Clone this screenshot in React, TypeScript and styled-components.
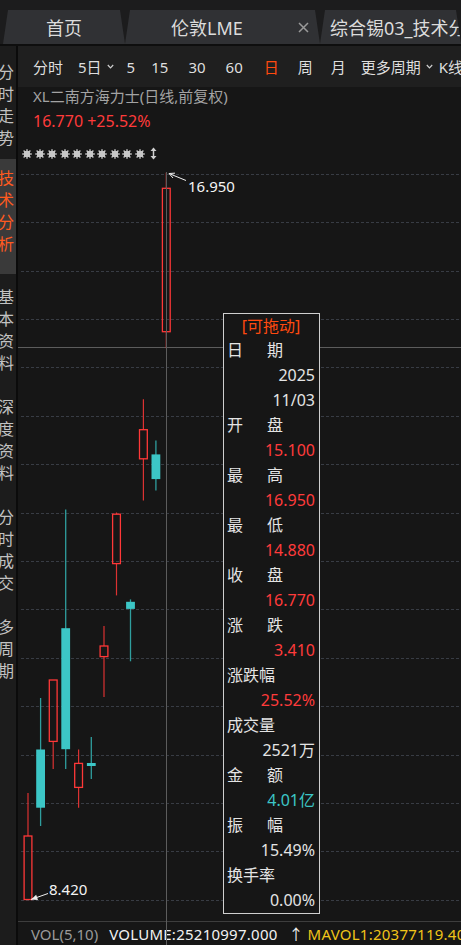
import styled, { createGlobalStyle } from "styled-components";

const RED = "#ff3b3b";
const CYAN = "#3cc6c6";
const TEXT = "#e4e4e4";

const GlobalStyle = createGlobalStyle`
  html, body {
    margin: 0;
    padding: 0;
    background: #161616;
  }
  body {
    font-family: "Noto Sans", "Noto Sans CJK SC", sans-serif;
  }
  * {
    box-sizing: border-box;
  }
`;

const Page = styled.div`
  width: 461px;
  height: 945px;
  overflow: hidden;
  display: flex;
  flex-direction: column;
  background: #161616;
`;

const TabBar = styled.div`
  height: 46px;
  padding: 10px 0 0 3px;
  display: flex;
  background: #1c1c1d;
  border-bottom: 2px solid #0e0e0e;
`;

const Tab = styled.div<{ $w?: number; $pl: number }>`
  flex: ${(p) => (p.$w ? `0 0 ${p.$w}px` : "1 1 0")};
  min-width: 0;
  display: flex;
  align-items: center;
  padding-left: ${(p) => p.$pl}px;
  padding-right: 11px;
  background: #303134;
  clip-path: polygon(5px 0, calc(100% - 5px) 0, 100% 100%, 0 100%);
  color: #dcdcdc;
  font-size: 18px;
  white-space: nowrap;
  overflow: hidden;
`;

const Close = styled.svg`
  margin-left: auto;
  flex-shrink: 0;
`;

const Body = styled.div`
  flex: 1;
  display: flex;
  min-height: 0;
`;

const Sidebar = styled.div`
  width: 18px;
  flex-shrink: 0;
  padding-top: 3px;
  background: #1c1c1c;
  border-right: 2px solid #0b0b0b;
  overflow: hidden;
`;

const SideItem = styled.div<{ $active?: boolean }>`
  padding: ${(p) => (p.$active ? "8px 0 19px" : "12px 0 10px")};
  background: ${(p) => (p.$active ? "#3a3a3a" : "transparent")};
  color: ${(p) => (p.$active ? "#ff5a1f" : "#c2c2c2")};
  font-size: 16px;
  line-height: 22px;
`;

const SideText = styled.div`
  width: 16px;
  margin-left: -2px;
  word-break: break-all;
  text-align: center;
`;

const Main = styled.div`
  flex: 1;
  min-width: 0;
  display: flex;
  flex-direction: column;
  position: relative;
`;

const Toolbar = styled.div`
  height: 41px;
  flex-shrink: 0;
  display: flex;
  align-items: center;
  padding-left: 15px;
  background: #1f1f1f;
  font-size: 15px;
  white-space: nowrap;
  overflow: hidden;
`;

const Period = styled.span<{ $ml: number; $active?: boolean }>`
  margin-left: ${(p) => p.$ml}px;
  color: ${(p) => (p.$active ? "#ff4a0f" : "#dedede")};
  display: inline-flex;
  align-items: center;
  flex-shrink: 0;
`;

const Chevron = styled.svg`
  margin-left: 5px;
`;

const Header = styled.div`
  height: 78px;
  flex-shrink: 0;
  display: flex;
  flex-direction: column;
`;

const Title = styled.div`
  padding-left: 15px;
  font-size: 15px;
  line-height: 18px;
  color: #a3a3a3;
`;

const Quote = styled.div`
  margin-top: 6px;
  padding-left: 15px;
  font-size: 16px;
  line-height: 20px;
  color: ${RED};
`;

const IconRow = styled.div`
  margin-top: 16px;
  padding-left: 4px;
  display: flex;
  align-items: center;
  gap: 2.5px;
`;

const Plot = styled.div`
  flex: 1;
  position: relative;
  min-height: 0;
`;

const PlotSvg = styled.svg`
  display: block;
`;

const InfoBox = styled.div`
  position: absolute;
  left: 205px;
  top: 148px;
  width: 97px;
  border: 1px solid #cfcfcf;
  background: #161616;
  padding: 0 4px 0 3px;
  font-size: 16px;
`;

const InfoTitle = styled.div`
  height: 24px;
  line-height: 24px;
  text-align: center;
  color: #ff4a0f;
`;

const InfoLabel = styled.div<{ $spread: boolean }>`
  height: 25px;
  line-height: 25px;
  color: ${TEXT};
  letter-spacing: ${(p) => (p.$spread ? "24px" : "0")};
  white-space: nowrap;
`;

const InfoValue = styled.div<{ $color: string }>`
  height: 25px;
  line-height: 25px;
  text-align: right;
  color: ${(p) => p.$color};
  white-space: nowrap;
`;

const BottomBar = styled.div`
  height: 24px;
  flex-shrink: 0;
  display: flex;
  align-items: center;
  padding-left: 13px;
  border-top: 1px solid #3d3d3d;
  font-size: 15px;
  white-space: nowrap;
  overflow: hidden;
`;

const BarText = styled.span<{ $color: string; $ml?: number; $wide?: boolean }>`
  color: ${(p) => p.$color};
  margin-left: ${(p) => p.$ml ?? 0}px;
  letter-spacing: ${(p) => (p.$wide ? "0.25px" : "0")};
  flex-shrink: 0;
`;

const CrossV = styled.div`
  position: absolute;
  left: 148px;
  top: 126px;
  bottom: 0;
  width: 1px;
  background: #5c5c5c;
  pointer-events: none;
`;

const periods = [
  { t: "分时", ml: 0 },
  { t: "5日", ml: 15, more: true },
  { t: "5", ml: 13 },
  { t: "15", ml: 16 },
  { t: "30", ml: 20 },
  { t: "60", ml: 20 },
  { t: "日", ml: 21, active: true },
  { t: "周", ml: 19 },
  { t: "月", ml: 18 },
  { t: "更多周期", ml: 15, more: true },
  { t: "K线", ml: 6 },
];

const sideItems = ["分时走势", "技术分析", "基本资料", "深度资料", "分时成交", "多周期"];

type InfoRow = { label?: string; value?: string; color?: string };

const infoRows: InfoRow[] = [
  { label: "日期" },
  { value: "2025" },
  { value: "11/03" },
  { label: "开盘" },
  { value: "15.100", color: RED },
  { label: "最高" },
  { value: "16.950", color: RED },
  { label: "最低" },
  { value: "14.880", color: RED },
  { label: "收盘" },
  { value: "16.770", color: RED },
  { label: "涨跌" },
  { value: "3.410", color: RED },
  { label: "涨跌幅" },
  { value: "25.52%", color: RED },
  { label: "成交量" },
  { value: "2521万" },
  { label: "金额" },
  { value: "4.01亿", color: CYAN },
  { label: "振幅" },
  { value: "15.49%" },
  { label: "换手率" },
  { value: "0.00%" },
];

// cx, wick top, body top, body bottom, wick bottom, rising
const candles: [number, number, number, number, number, boolean][] = [
  [28, 793, 836, 899.5, 899.5, true],
  [40.6, 698, 749.5, 807.7, 826, false],
  [53.2, 680, 680, 741.4, 769, true],
  [65.7, 509.5, 628.2, 749.2, 769, false],
  [78.6, 749.5, 763.4, 787.4, 807.7, true],
  [91.3, 737, 763, 766, 779, false],
  [104, 626, 646, 656.6, 697, true],
  [116.5, 512.5, 514.2, 563.6, 595.4, true],
  [130.5, 599.4, 601.8, 608.9, 661.3, false],
  [143.4, 399.3, 429.7, 458.8, 500.4, true],
  [155.9, 440.5, 454.4, 479.1, 490.6, false],
  [166.3, 172.7, 188.3, 331.7, 348.3, true],
];

const gridLines = Array.from({ length: 16 }, (_, k) => Math.round(173.7 + k * 48.4) + 0.5);

function head(tx: number, ty: number, fx: number, fy: number, len = 6, spread = 0.45) {
  const a = Math.atan2(fy - ty, fx - tx);
  const p1 = [tx + len * Math.cos(a + spread), ty + len * Math.sin(a + spread)];
  const p2 = [tx + len * Math.cos(a - spread), ty + len * Math.sin(a - spread)];
  return { p1, p2 };
}

const Gear = () => (
  <svg width="10" height="10" viewBox="0 0 10 10">
    <rect x="2" y="2" width="6" height="6" rx="1.2" fill="#c8c8c8" />
    {Array.from({ length: 8 }, (_, i) => {
      const a = (i * Math.PI) / 4;
      return (
        <line
          key={i}
          x1={5 + 2.5 * Math.cos(a)}
          y1={5 + 2.5 * Math.sin(a)}
          x2={5 + 4.8 * Math.cos(a)}
          y2={5 + 4.8 * Math.sin(a)}
          stroke="#c8c8c8"
          strokeWidth="1.4"
        />
      );
    })}
  </svg>
);

const UpDown = () => (
  <svg width="7" height="13" viewBox="0 0 7 13" style={{ marginLeft: 3 }}>
    <line x1="3.5" y1="2" x2="3.5" y2="11" stroke="#d0d0d0" strokeWidth="1.5" />
    <polygon points="0.5,4 3.5,0.5 6.5,4" fill="#d0d0d0" />
    <polygon points="0.5,9 3.5,12.5 6.5,9" fill="#d0d0d0" />
  </svg>
);

const Chart = () => {
  const top = head(169, 173.5, 186, 180.5);
  const bot = head(31, 899.5, 48, 893.5, 7, 0.4);
  return (
    <PlotSvg width="443" height="756" viewBox="0 0 443 756">
      <g transform="translate(-18,-165)">
        {gridLines.map((y) => (
          <line key={y} x1="21" x2="461" y1={y} y2={y} stroke="#383c44" strokeDasharray="3 2" />
        ))}
        <line x1="18" x2="461" y1="347.5" y2="347.5" stroke="#5c5c5c" />
        {candles.map(([cx, wt, bt, bb, wb, up], i) =>
          up ? (
            <g key={i}>
              <line x1={cx} x2={cx} y1={wt} y2={bt} stroke="#dc3232" strokeWidth="1.2" />
              <line x1={cx} x2={cx} y1={bb} y2={wb} stroke="#dc3232" strokeWidth="1.2" />
              <rect
                x={cx - 3.9}
                y={bt}
                width="7.8"
                height={Math.max(bb - bt, 1)}
                fill="none"
                stroke="#ff3838"
                strokeWidth="1.3"
              />
            </g>
          ) : (
            <g key={i}>
              <line x1={cx} x2={cx} y1={wt} y2={wb} stroke="#2f9e9e" strokeWidth="1.3" />
              <rect x={cx - 4.4} y={bt} width="8.8" height={Math.max(bb - bt, 2.5)} fill={CYAN} />
            </g>
          )
        )}
        <line x1="169" y1="173.5" x2="186" y2="180.5" stroke="#f0f0f0" strokeWidth="1" />
        <polyline
          points={`${top.p1} 169,173.5 ${top.p2}`}
          fill="none"
          stroke="#f0f0f0"
          strokeWidth="1"
        />
        <text x="188" y="192" fill="#f4f4f4" fontSize="15" fontFamily="Noto Sans, sans-serif">
          16.950
        </text>
        <line x1="31" y1="899.5" x2="48" y2="893.5" stroke="#f0f0f0" strokeWidth="1" />
        <polygon points={`31,899.5 ${bot.p1} ${bot.p2}`} fill="#f0f0f0" />
        <text x="49" y="894.5" fill="#f4f4f4" fontSize="15" fontFamily="Noto Sans, sans-serif">
          8.420
        </text>
      </g>
    </PlotSvg>
  );
};

const App = () => {
  return (
    <Page>
      <GlobalStyle />
      <TabBar>
        <Tab $w={122} $pl={43}>
          首页
        </Tab>
        <Tab $w={195} $pl={46}>
          伦敦LME
          <Close width="11" height="11" viewBox="0 0 11 11">
            <path d="M1 1 L10 10 M10 1 L1 10" stroke="#9a9a9a" strokeWidth="1.5" />
          </Close>
        </Tab>
        <Tab $pl={10}>综合锡03_技术分析</Tab>
      </TabBar>
      <Body>
        <Sidebar>
          {sideItems.map((s) => (
            <SideItem key={s} $active={s === "技术分析"}>
              <SideText>{s}</SideText>
            </SideItem>
          ))}
        </Sidebar>
        <Main>
          <Toolbar>
            {periods.map((p) => (
              <Period key={p.t} $ml={p.ml} $active={p.active}>
                {p.t}
                {p.more && (
                  <Chevron width="7" height="5" viewBox="0 0 7 5">
                    <polyline points="0.8,1 3.5,3.8 6.2,1" fill="none" stroke="#cfcfcf" strokeWidth="1.2" />
                  </Chevron>
                )}
              </Period>
            ))}
          </Toolbar>
          <Header>
            <Title>XL二南方海力士(日线,前复权)</Title>
            <Quote>16.770 +25.52%</Quote>
            <IconRow>
              {Array.from({ length: 10 }, (_, i) => (
                <Gear key={i} />
              ))}
              <UpDown />
            </IconRow>
          </Header>
          <Plot>
            <Chart />
            <InfoBox>
              <InfoTitle>[可拖动]</InfoTitle>
              {infoRows.map((r, i) =>
                r.label ? (
                  <InfoLabel key={i} $spread={r.label.length === 2}>
                    {r.label}
                  </InfoLabel>
                ) : (
                  <InfoValue key={i} $color={r.color ?? TEXT}>
                    {r.value}
                  </InfoValue>
                )
              )}
            </InfoBox>
          </Plot>
          <BottomBar>
            <BarText $color="#9a9a9a">VOL(5,10)</BarText>
            <BarText $color="#f2f2f2" $ml={11} $wide>
              VOLUME:25210997.000
            </BarText>
            <BarText $color="#f2f2f2" $ml={11}>
              ↑
            </BarText>
            <BarText $color="#f0c419" $ml={4} $wide>
              MAVOL1:20377119.40
            </BarText>
          </BottomBar>
          <CrossV />
        </Main>
      </Body>
    </Page>
  );
};

export default App;
